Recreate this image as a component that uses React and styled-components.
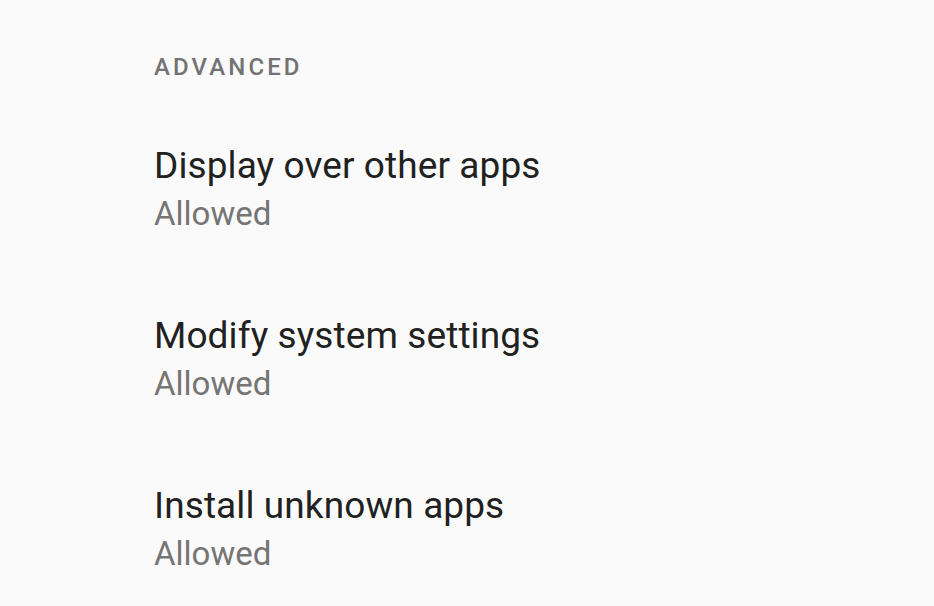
import React from "react";
import styled, { createGlobalStyle } from "styled-components";

const Global = createGlobalStyle`
  html, body { margin: 0; padding: 0; background: #fafafa; }
  body { font-family: Roboto, "Noto Sans", sans-serif; }
`;

const Page = styled.div`
  width: 934px;
  height: 606px;
  background: #fafafa;
  overflow: hidden;
  box-sizing: border-box;
  padding: 53px 0 0 154px;
`;

const Header = styled.div`
  font-size: 24px;
  font-weight: 500;
  letter-spacing: 3.1px;
  color: #737373;
  line-height: 28px;
  height: 28px;
`;

const List = styled.div`
  display: flex;
  flex-direction: column;
  margin-top: 62px;
  gap: 77px;
`;

const Item = styled.div`
  display: flex;
  flex-direction: column;
  gap: 3px;
`;

const Title = styled.div`
  font-size: 37px;
  color: #212121;
  line-height: 46px;
  letter-spacing: 0.1px;
`;

const Sub = styled.div`
  font-size: 33px;
  color: #757575;
  line-height: 44px;
`;

const items = [
  "Display over other apps",
  "Modify system settings",
  "Install unknown apps",
];

export default function App() {
  return (
    <Page>
      <Global />
      <Header>ADVANCED</Header>
      <List>
        {items.map((t) => (
          <Item key={t}>
            <Title>{t}</Title>
            <Sub>Allowed</Sub>
          </Item>
        ))}
      </List>
    </Page>
  );
}
